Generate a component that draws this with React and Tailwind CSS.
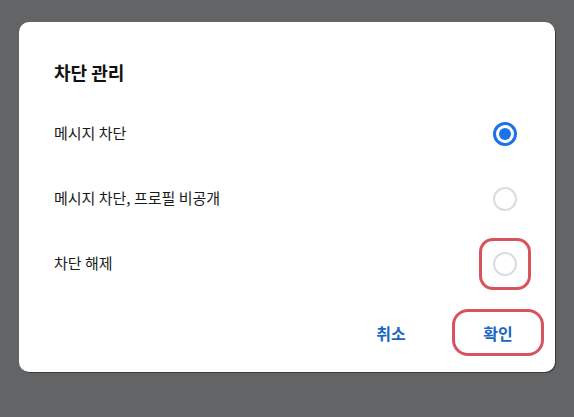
const font = { fontFamily: '"Noto Sans CJK KR", "Noto Sans", sans-serif' }

function Radio({ checked }) {
  if (checked) {
    return (
      <div className="w-6 h-6 rounded-full border-[3px] border-[#1a73e8] flex items-center justify-center">
        <div className="w-3 h-3 rounded-full bg-[#1a73e8]" />
      </div>
    )
  }
  return <div className="w-6 h-6 rounded-full border-2 border-[#d9dce1]" />
}

const options = [
  { label: '메시지 차단', checked: true },
  { label: '메시지 차단, 프로필 비공개', checked: false },
  { label: '차단 해제', checked: false, marked: true },
]

export default function App() {
  return (
    <div className="w-[574px] h-[417px] bg-[#636466] pt-[22px] pl-[19px]" style={font}>
      <div className="w-[536px] h-[350px] bg-white rounded-[10px] shadow-[1px_1px_0_#3a3a3a] flex flex-col pt-[37px]">
        {/* Title */}
        <h2 className="pl-[35px] text-[18px] leading-[26px] font-bold text-[#111]">차단 관리</h2>

        {/* Options */}
        <div className="mt-[16px] flex flex-col">
          {options.map((o) => (
            <div key={o.label} className="h-[65px] flex items-center justify-between pl-[35px] pr-[38px]">
              <span className="text-[15px] text-[#1a1a1a]">{o.label}</span>
              <div className="relative">
                <Radio checked={o.checked} />
                {o.marked && (
                  <div className="absolute -inset-[14px] rounded-[14px] border-[3px] border-[#d9535f]" />
                )}
              </div>
            </div>
          ))}
        </div>

        {/* Actions */}
        <div className="mt-[13px] flex justify-end items-center gap-[29px] pr-[11px]">
          <button className="w-[64px] h-[46px] text-[16px] font-bold text-[#1a66c4]">취소</button>
          <button className="w-[92px] h-[47px] rounded-[16px] border-[3px] border-[#d9535f] text-[16px] font-bold text-[#1a66c4]">
            확인
          </button>
        </div>
      </div>
    </div>
  )
}
